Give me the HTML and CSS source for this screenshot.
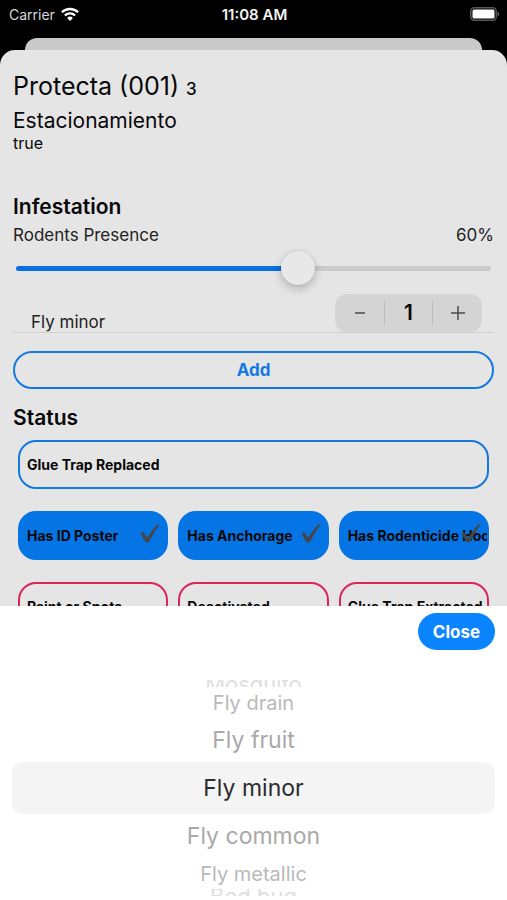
FILE: index.html
```html
<!DOCTYPE html>
<html lang="en">
<head>
<meta charset="utf-8">
<meta name="viewport" content="width=device-width, initial-scale=1">
<title>Protecta (001)</title>
<link rel="stylesheet" href="styles.css">
</head>
<body>
<svg class="defs" aria-hidden="true">
  <symbol id="check" viewBox="0 0 20 20"><path d="M.6 10.200C.9 9 2.400 8 3.500 8.400c1.200 1.300 2.300 3.200 3.500 5.400C10 9.400 13.200 4.600 16.600 1.200c.8-.8 2.500-.9 3-.4-3.500 4.600-6.900 10.300-9.900 16-.7 1.500-3.400 2.300-4.300 1.100C3.800 15.400 2.400 12.600.6 10.200z" fill="#444648"/></symbol>
</svg>
<div class="app">
  <header class="statusbar">
    <div class="carrier"><span>Carrier</span>
      <svg class="wifi" viewBox="0 0 18 14" aria-hidden="true"><g fill="none" stroke="#fff" stroke-width="2.300"><path d="M.9 5.300a11.600 11.600 0 0 1 16.200 0"/><path d="M3.900 8.500a7.300 7.300 0 0 1 10.200 0"/></g><path d="M9 14L6.100 11a4.200 4.200 0 0 1 5.800 0z" fill="#fff"/></svg>
    </div>
    <time class="clock">11:08 AM</time>
    <svg class="battery" viewBox="0 0 30 14" aria-hidden="true"><rect x=".75" y=".75" width="25.500" height="12.500" rx="3.500" fill="none" stroke="#59595b" stroke-width="1.500"/><rect x="2.500" y="2.500" width="22" height="9" rx="1.500" fill="#fff"/><path d="M27.500 4.500c2.400.8 2.400 4.200 0 5z" fill="#59595b"/></svg>
  </header>
  <div class="backcard"></div>
  <main class="sheet">
    <h1 class="title">Protecta (001) <span class="count">3</span></h1>
    <p class="place">Estacionamiento</p>
    <p class="flag">true</p>

    <h2 class="heading infestation">Infestation</h2>
    <div class="presence"><label for="presence">Rodents Presence</label><output for="presence">60%</output></div>
    <input class="slider" id="presence" type="range" min="0" max="100" value="60">
    <div class="pest">
      <span class="pest-name" id="pest-name">Fly minor</span>
      <div class="stepper" role="group" aria-labelledby="pest-name">
        <button type="button" aria-label="Decrease"><svg viewBox="0 0 16 16"><path d="M3 8h10"/></svg></button>
        <output>1</output>
        <button type="button" aria-label="Increase"><svg viewBox="0 0 16 16"><path d="M1 8h14M8 1v14"/></svg></button>
      </div>
    </div>
    <button class="add" type="button">Add</button>

    <h2 class="heading">Status</h2>
    <div class="chips">
      <label class="chip wide"><input type="checkbox"><span>Glue Trap Replaced</span></label>
      <label class="chip on"><input type="checkbox" checked><span>Has ID Poster</span><svg><use href="#check"/></svg></label>
      <label class="chip on"><input type="checkbox" checked><span>Has Anchorage</span><svg><use href="#check"/></svg></label>
      <label class="chip on"><input type="checkbox" checked><span>Has Rodenticide Hook</span><svg><use href="#check"/></svg></label>
      <label class="chip alert"><input type="checkbox"><span>Paint or Spots</span></label>
      <label class="chip alert"><input type="checkbox"><span>Deactivated</span></label>
      <label class="chip alert"><input type="checkbox"><span>Glue Trap Extracted</span></label>
    </div>
  </main>
  <section class="picker">
    <div class="toolbar"><button class="close" type="button">Close</button></div>
    <div class="wheel" role="listbox" aria-label="Pest">
      <button type="button" role="option" class="option edge top">Mosquito</button>
      <button type="button" role="option" class="option far">Fly drain</button>
      <button type="button" role="option" class="option near">Fly fruit</button>
      <button type="button" role="option" class="option selected" aria-selected="true">Fly minor</button>
      <button type="button" role="option" class="option near">Fly common</button>
      <button type="button" role="option" class="option far">Fly metallic</button>
      <button type="button" role="option" class="option edge bottom">Bed bug</button>
    </div>
  </section>
</div>
</body>
</html>
```
FILE: styles.css
```css
* { box-sizing: border-box; }
body {
  margin: 0;
  background: #000;
  color: #080808;
  font-family: Inter, "Liberation Sans", sans-serif;
  font-size: 17px;
}
h1, h2, p { margin: 0; font-weight: 400; }
button { font: inherit; color: inherit; border: 0; padding: 0; background: none; }
.defs { position: absolute; width: 0; height: 0; }

.app { display: flex; flex-direction: column; height: 100vh; }

.statusbar {
  flex: none;
  display: grid;
  grid-template-columns: 1fr auto 1fr;
  align-items: center;
  height: 38px;
  padding: 0 7px 10px 9px;
  color: #f4f4f4;
  font-size: 14px;
}
.carrier { display: flex; align-items: center; gap: 6px; color: #d8d8d8; }
.wifi { width: 18px; height: 14px; }
.clock { font-size: 15px; font-weight: 600; }
.battery { width: 30px; height: 14px; justify-self: end; }

.backcard { flex: none; height: 12px; margin: 0 25px; border-radius: 12px 12px 0 0; background: #c9c9c9; }

.sheet {
  flex: 1;
  min-height: 0;
  overflow: hidden;
  padding: 20px 13px 0;
  border-radius: 15px 15px 0 0;
  background: #e5e5e5;
}
.title { font-size: 25px; line-height: 32px; }
.count { font-size: 17px; font-weight: 500; }
.place { margin-top: 4px; font-size: 21px; line-height: 24px; }
.flag { font-size: 16px; line-height: 20px; }
.heading { font-size: 21px; line-height: 26px; font-weight: 600; }
.infestation { margin-top: 41px; }
.presence { display: flex; justify-content: space-between; margin-top: 4px; line-height: 22px; color: #222; }

.slider {
  appearance: none;
  display: block;
  width: calc(100% - 6px);
  height: 36px;
  margin: 4px 3px 0;
  background: none;
}
.slider::-webkit-slider-runnable-track {
  height: 5px;
  border-radius: 3px;
  background: linear-gradient(to right, #0a6fe0 60%, #cbcbcb 60%);
}
.slider::-webkit-slider-thumb {
  appearance: none;
  width: 34px;
  height: 34px;
  margin-top: -15px;
  border-radius: 50%;
  background: #e8e8e8;
  box-shadow: 0 4px 10px rgba(0, 0, 0, .22), 0 0 2px rgba(0, 0, 0, .12);
}

.pest {
  display: flex;
  justify-content: space-between;
  align-items: flex-end;
  height: 47px;
  padding: 0 12px 0 18px;
  border-bottom: 1px solid #cfcfcf;
}
.pest-name { line-height: 20px; color: #222; }
.stepper {
  display: grid;
  grid-template-columns: repeat(3, 1fr);
  align-items: center;
  width: 147px;
  height: 38px;
  border-radius: 12px;
  background: #d4d4d4;
}
.stepper button { display: grid; place-items: center; height: 38px; }
.stepper svg { width: 16px; height: 16px; fill: none; stroke: #4a4a4a; stroke-width: 1.5; }
.stepper output {
  border: solid #bcbcbc;
  border-width: 0 1px;
  font-size: 21px;
  font-weight: 600;
  line-height: 24px;
  text-align: center;
}

.add {
  display: block;
  width: 100%;
  height: 38px;
  margin: 18px 0 16px;
  border: 2px solid #1279e2;
  border-radius: 19px;
  color: #1279e2;
  font-weight: 700;
}

.chips {
  display: grid;
  grid-template-columns: repeat(3, minmax(0, 1fr));
  gap: 22px 10px;
  padding: 0 5px;
  margin-top: 9px;
}
.chip {
  position: relative;
  display: flex;
  align-items: center;
  height: 49px;
  padding: 0 0 0 7px;
  overflow: hidden;
  border: 2px solid #1279e2;
  border-radius: 18px;
  font-size: 14px;
  font-weight: 700;
  white-space: nowrap;
}
.chip input { appearance: none; position: absolute; inset: 0; margin: 0; }
.chip svg { position: absolute; right: 6px; top: 11px; width: 20px; height: 20px; }
.wide { grid-column: 1 / -1; }
.on { border-color: #0575e6; background: #0575e6; }
.alert { border-color: #d9275c; }

.picker { flex: none; padding: 7px 12px 4px; background: #fff; }
.toolbar { display: flex; justify-content: flex-end; }
.close {
  width: 77px;
  height: 37px;
  border-radius: 19px;
  background: #0a84ff;
  color: #fff;
  font-weight: 700;
}
.wheel { display: flex; flex-direction: column; margin-top: 30px; }
.option { width: 100%; text-align: center; }
.selected { height: 52px; border-radius: 10px; background: #f4f4f4; color: #2c2c2c; font-size: 23px; }
.near { height: 44px; color: #a9a9a9; font-size: 23px; }
.far { height: 31px; color: #b9b9b9; font-size: 20px; }
.edge { display: flex; justify-content: center; height: 7px; overflow: hidden; color: #dedede; font-size: 22px; }
.top { align-items: center; line-height: 22px; }
.bottom { align-items: flex-start; line-height: 14px; }
```
